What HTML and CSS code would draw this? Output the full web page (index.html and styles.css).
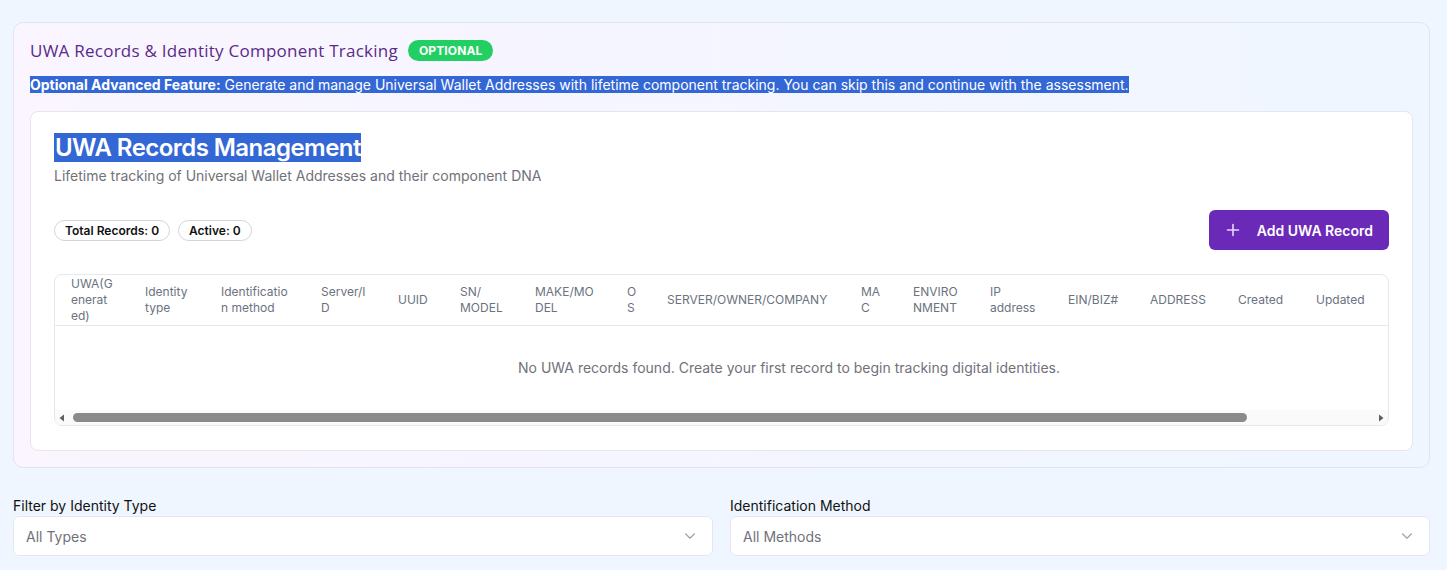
FILE: index.html
```html
<!DOCTYPE html>
<html lang="en">
<head>
<meta charset="utf-8">
<title>UWA Records</title>
<link rel="stylesheet" href="styles.css">
</head>
<body>
<div class="page">
  <section class="panel">
    <div class="panel-title-row">
      <h2 class="panel-title">UWA Records &amp; Identity Component Tracking</h2>
      <span class="badge-optional">OPTIONAL</span>
    </div>
    <p class="panel-desc"><span class="sel"><strong>Optional Advanced Feature:</strong> Generate and manage Universal Wallet Addresses with lifetime component tracking. You can skip this and continue with the assessment.</span></p>

    <div class="card">
      <div class="card-head">
        <h1 class="card-title"><span class="sel">UWA Records Management</span></h1>
        <p class="card-sub">Lifetime tracking of Universal Wallet Addresses and their component DNA</p>
      </div>

      <div class="toolbar">
        <div class="stats">
          <span class="stat">Total Records: 0</span>
          <span class="stat">Active: 0</span>
        </div>
        <button class="btn-add" type="button">
          <svg class="btn-icon" viewBox="0 0 16 16" width="16" height="16" aria-hidden="true"><path d="M8 2.5v11M2.5 8h11" stroke="currentColor" stroke-width="1.6" stroke-linecap="round" fill="none"/></svg>
          <span>Add UWA Record</span>
        </button>
      </div>

      <div class="table-wrap">
        <div class="table-viewport">
          <table class="records">
            <colgroup>
              <col class="c1"><col class="c2"><col class="c3"><col class="c4"><col class="c5"><col class="c6"><col class="c7"><col class="c8"><col class="c9"><col class="c10"><col class="c11"><col class="c12"><col class="c13"><col class="c14"><col class="c15"><col class="c16"><col class="c17">
            </colgroup>
            <thead>
              <tr>
                <th>UWA(Generated)</th>
                <th>Identity type</th>
                <th>Identification method</th>
                <th>Server/ID</th>
                <th>UUID</th>
                <th>SN/ MODEL</th>
                <th>MAKE/MODEL</th>
                <th>OS</th>
                <th>SERVER/OWNER/COMPANY</th>
                <th>MAC</th>
                <th>ENVIRONMENT</th>
                <th>IP address</th>
                <th class="nowrap">EIN/BIZ#</th>
                <th>ADDRESS</th>
                <th>Created</th>
                <th>Updated</th>
                <th></th>
              </tr>
            </thead>
            <tbody>
              <tr>
                <td class="empty" colspan="17">No UWA records found. Create your first record to begin tracking digital identities.</td>
              </tr>
            </tbody>
          </table>
        </div>
        <div class="hscroll" aria-hidden="true">
          <span class="hs-btn"><svg viewBox="0 0 6 8" width="6" height="8"><path d="M0.5 4 5 0.6v6.8z" fill="#5f5f5f"/></svg></span>
          <span class="hs-track"><span class="hs-thumb" style="width: 90.2%"></span></span>
          <span class="hs-btn"><svg viewBox="0 0 6 8" width="6" height="8"><path d="M5.5 4 1 0.6v6.8z" fill="#5f5f5f"/></svg></span>
        </div>
      </div>
    </div>
  </section>

  <div class="filters">
    <div class="filter">
      <label class="filter-label">Filter by Identity Type</label>
      <div class="select">
        <span class="select-value">All Types</span>
        <svg class="chev" viewBox="0 0 12 8" width="12" height="8" aria-hidden="true"><path d="M1.5 1.8 6 6.2l4.5-4.4" stroke="currentColor" stroke-width="1.2" fill="none" stroke-linecap="round" stroke-linejoin="round"/></svg>
      </div>
    </div>
    <div class="filter">
      <label class="filter-label">Identification Method</label>
      <div class="select">
        <span class="select-value">All Methods</span>
        <svg class="chev" viewBox="0 0 12 8" width="12" height="8" aria-hidden="true"><path d="M1.5 1.8 6 6.2l4.5-4.4" stroke="currentColor" stroke-width="1.2" fill="none" stroke-linecap="round" stroke-linejoin="round"/></svg>
      </div>
    </div>
  </div>
</div>
</body>
</html>
```

FILE: styles.css
```css
* { box-sizing: border-box; }

html, body {
  margin: 0;
  padding: 0;
  background: #eff6ff;
  font-family: Inter, "Noto Sans", "Liberation Sans", sans-serif;
  color: #111827;
}

.page {
  padding: 22px 17px 0 13px;
}

.panel {
  background: linear-gradient(to right, #faf5ff, #eff6ff);
  border: 1px solid #e2e4ec;
  border-radius: 10px;
  padding: 16px;
}

.panel-title-row {
  display: flex;
  align-items: center;
  height: 23px;
}

.panel-title {
  margin: 0;
  font-family: "Open Sans", Lato, sans-serif;
  font-weight: 500;
  font-size: 17px;
  letter-spacing: 0.25px;
  line-height: 23px;
  color: #5b2a89;
}

.badge-optional {
  margin-left: 10px;
  display: inline-flex;
  align-items: center;
  height: 21px;
  padding: 0 11px;
  border-radius: 999px;
  background: #22cf62;
  color: #fff;
  font-size: 12px;
  font-weight: 700;
  letter-spacing: 0.1px;
}

.panel-desc {
  margin: 13px 0 0;
  font-size: 14px;
  line-height: 20px;
  color: #4c1d95;
}

.sel {
  background: #3367d6;
  color: #fff;
}

.panel-desc strong { font-weight: 700; }

.card {
  margin-top: 16px;
  background: #fff;
  border: 1px solid #e5e7eb;
  border-radius: 8px;
  padding: 21px 23px 24px 23px;
}

.card-title {
  margin: 0;
  font-size: 24px;
  font-weight: 600;
  line-height: 29px;
  letter-spacing: -0.55px;
}

.card-title .sel { padding-left: 1px; }

.card-sub {
  margin: 4px 0 0;
  font-size: 14px;
  line-height: 20px;
  color: #71717a;
}

.toolbar {
  margin-top: 24px;
  display: flex;
  align-items: center;
  justify-content: space-between;
}

.stats {
  display: flex;
  gap: 8px;
}

.stat {
  display: inline-flex;
  align-items: center;
  height: 21px;
  padding: 0 10px;
  border: 1px solid #d4d4d8;
  border-radius: 999px;
  font-size: 12px;
  font-weight: 600;
  color: #111;
}

.btn-add {
  display: inline-flex;
  align-items: center;
  gap: 16px;
  height: 40px;
  padding: 0 16px;
  border: 0;
  border-radius: 6px;
  background: #6b29b8;
  color: #fff;
  font-family: inherit;
  font-size: 14px;
  font-weight: 600;
}

.btn-icon { color: #e9d5ff; }

.table-wrap {
  margin-top: 24px;
  border: 1px solid #e5e7eb;
  border-radius: 8px;
  overflow: hidden;
}

.table-viewport {
  overflow: hidden;
}

.hscroll {
  display: flex;
  align-items: center;
  height: 15px;
  background: #fafafa;
}

.hs-btn {
  width: 14px;
  height: 15px;
  display: flex;
  align-items: center;
  justify-content: center;
  flex: none;
}

.hs-track {
  flex: 1;
  height: 15px;
  padding: 3px 0 3px 4px;
  display: flex;
}

.hs-thumb {
  display: block;
  height: 9px;
  border-radius: 5px;
  background: #8a8a8a;
}

.records {
  width: 1468px;
  table-layout: fixed;
  border-collapse: collapse;
}

.c1 { width: 74px; }
.c2 { width: 76px; }
.c3 { width: 100px; }
.c4 { width: 77px; }
.c5 { width: 62px; }
.c6 { width: 75px; }
.c7 { width: 92px; }
.c8 { width: 40px; }
.c9 { width: 194px; }
.c10 { width: 52px; }
.c11 { width: 77px; }
.c12 { width: 78px; }
.c13 { width: 82px; }
.c14 { width: 88px; }
.c15 { width: 78px; }
.c16 { width: 81px; }
.c17 { width: 142px; }

.records th {
  padding: 1px 16px;
  text-align: left;
  vertical-align: middle;
  font-size: 12px;
  line-height: 16px;
  font-weight: 400;
  color: #6b7280;
  overflow-wrap: anywhere;
  border-bottom: 1px solid #e5e7eb;
}

.records th.nowrap {
  white-space: nowrap;
  overflow-wrap: normal;
}

.records td.empty {
  padding: 32px 16px;
  text-align: center;
  font-size: 14px;
  line-height: 20px;
  color: #71717a;
}

.filters {
  margin-top: 28px;
  display: grid;
  grid-template-columns: 1fr 1fr;
  gap: 17px;
}

.filter-label {
  display: block;
  font-size: 14px;
  line-height: 20px;
  font-weight: 400;
  color: #111;
  margin-bottom: 0;
}

.select {
  display: flex;
  align-items: center;
  justify-content: space-between;
  height: 40px;
  padding: 0 16px 0 12px;
  background: #fff;
  border: 1px solid #e5e7eb;
  border-radius: 6px;
}

.select-value {
  font-size: 14px;
  color: #71717a;
}

.chev { color: #a1a1aa; }
```
